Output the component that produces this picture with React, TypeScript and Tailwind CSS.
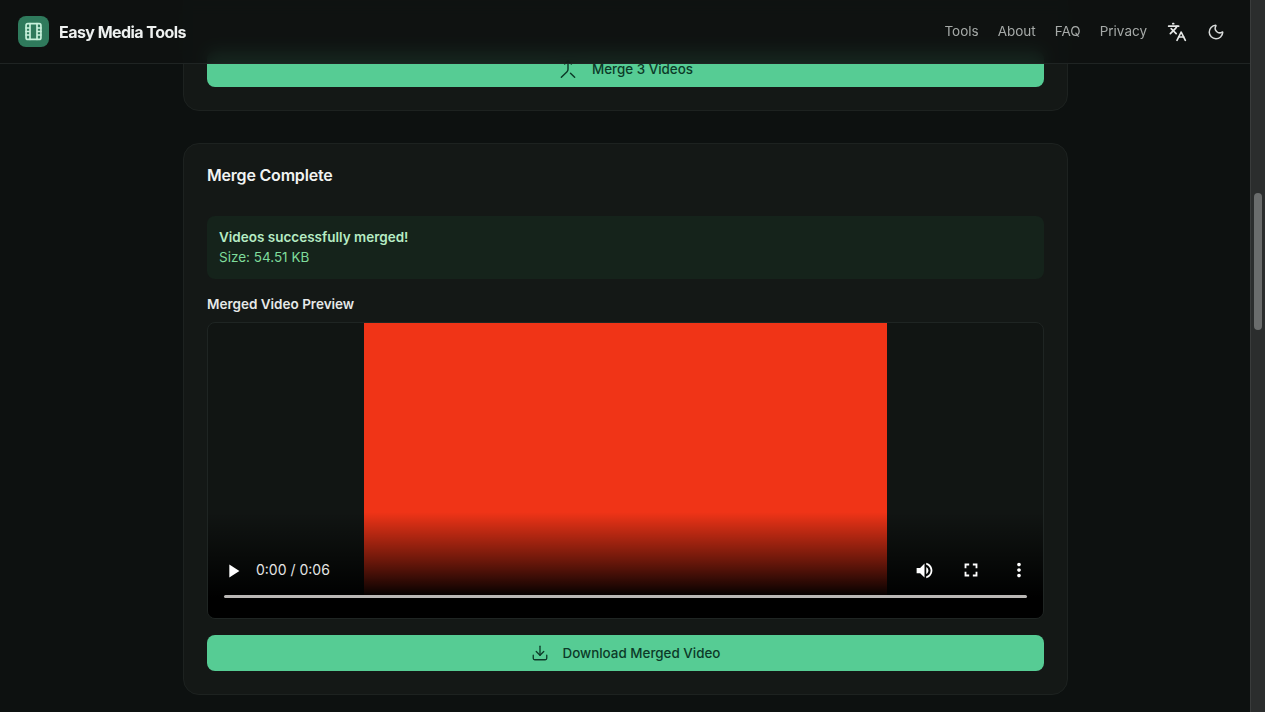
import React from "react";
import { Download, Languages, Merge, Moon } from "lucide-react";
import { MdFullscreen, MdMoreVert, MdPlayArrow, MdVolumeUp } from "react-icons/md";

const navLinks = ["Tools", "About", "FAQ", "Privacy"];

const FilmIcon = () => {
  return (
    <svg width="21" height="21" viewBox="0 0 24 24" fill="none" stroke="#c8f1dc" strokeWidth="1.9" strokeLinecap="round" strokeLinejoin="round">
      <rect x="3.5" y="3" width="17" height="18" rx="2" />
      <path d="M8 3v18M16 3v18M3.5 8H8M3.5 12H8M3.5 16H8M16 8h4.5M16 12h4.5M16 16h4.5" />
    </svg>
  );
};

const Header = () => {
  return (
    <header className="absolute inset-x-0 top-0 z-10 flex h-[64px] items-center justify-between border-b border-[#1f2423] bg-[#0e1211]/90 pl-[18px] pr-[25px] backdrop-blur-sm">
      <div className="flex items-center gap-[10px]">
        <div className="flex h-[31px] w-[31px] items-center justify-center rounded-lg bg-[#2f7a5c]">
          <FilmIcon />
        </div>
        <span className="text-base font-bold tracking-[-0.55px] text-[#eef1f0]">Easy Media Tools</span>
      </div>
      <nav className="flex items-center">
        <div className="flex items-center gap-[19px] text-[13.5px] text-[#a6aaa8]">
          {navLinks.map((link) => (
            <a key={link}>{link}</a>
          ))}
        </div>
        <Languages size={20} className="ml-[20px] text-[#e6e8e7]" />
        <Moon size={18} className="ml-[20px] text-[#d6d9d8]" />
      </nav>
    </header>
  );
};

const VideoPreview = () => {
  return (
    <div className="relative flex h-[297px] justify-center overflow-hidden rounded-lg border border-[#1f2523] bg-[#111513]">
      <div className="h-full w-[523px] bg-[#f03417]" />
      <div className="absolute inset-x-0 bottom-0 h-[115px] bg-gradient-to-b from-transparent from-[8%] via-black/55 via-[50%] to-black to-[82%]">
        <div className="flex h-[92px] items-end pb-[13px] pl-[14px] pr-[13px] text-white">
          <MdPlayArrow size={22} />
          <span className="ml-[12px] text-sm leading-[24px] text-[#e4e4e4]">0:00 / 0:06</span>
          <div className="flex-1" />
          <MdVolumeUp size={21} className="mb-px" />
          <MdFullscreen size={22} className="mb-px ml-[25px]" />
          <MdMoreVert size={22} className="mb-px ml-[26px]" />
        </div>
        <div className="mx-[16px] h-[3px] rounded-full bg-[#b9b7b5]" />
      </div>
    </div>
  );
};

const ActionButton = ({ children }: { children: React.ReactNode }) => {
  return (
    <button className="flex h-[36px] w-full items-center justify-center gap-[14px] rounded-lg bg-[#56cc94] text-[13.4px] font-medium text-[#0c3a28]">
      {children}
    </button>
  );
};

export default function App() {
  return (
    <div className="flex h-[712px] overflow-hidden bg-[#0d1110] font-['Inter',sans-serif]">
      <div className="relative flex-1 overflow-hidden">
        <Header />
        <main className="-mt-[20px] ml-[183px] flex w-[885px] flex-col gap-[32px]">
          <section className="rounded-2xl border border-[#1d2220] bg-[#141816] px-[23px] pb-[23px] pt-[70px]">
            <ActionButton>
              <Merge size={20} strokeWidth={1.75} />
              Merge 3 Videos
            </ActionButton>
          </section>

          <section className="rounded-2xl border border-[#1d2220] bg-[#141816] px-[23px] pb-[23px] pt-[19px]">
            <h2 className="text-base font-semibold leading-[24px] tracking-[-0.2px] text-[#f1f3f2]">Merge Complete</h2>
            <div className="mt-[29px] rounded-lg bg-[#15231b] px-[12px] pb-[12px] pt-[11px] text-[13.5px] leading-[20px]">
              <p className="font-semibold text-[#b6ecc4]">Videos successfully merged!</p>
              <p className="text-[#7fdc9b]">Size: 54.51 KB</p>
            </div>
            <p className="mb-[8px] mt-[15px] text-[13.5px] font-semibold leading-[20px] text-[#e6e9e8]">Merged Video Preview</p>
            <VideoPreview />
            <div className="mt-[16px]">
              <ActionButton>
                <Download size={18} strokeWidth={1.75} />
                Download Merged Video
              </ActionButton>
            </div>
          </section>
        </main>
      </div>
      <div className="flex h-full w-[15px] justify-center border-l border-[#3a3c3c] bg-[#2b2d2d]">
        <div className="mt-[193px] h-[137px] w-[8px] rounded-full bg-[#6a6c6c]" />
      </div>
    </div>
  );
}
